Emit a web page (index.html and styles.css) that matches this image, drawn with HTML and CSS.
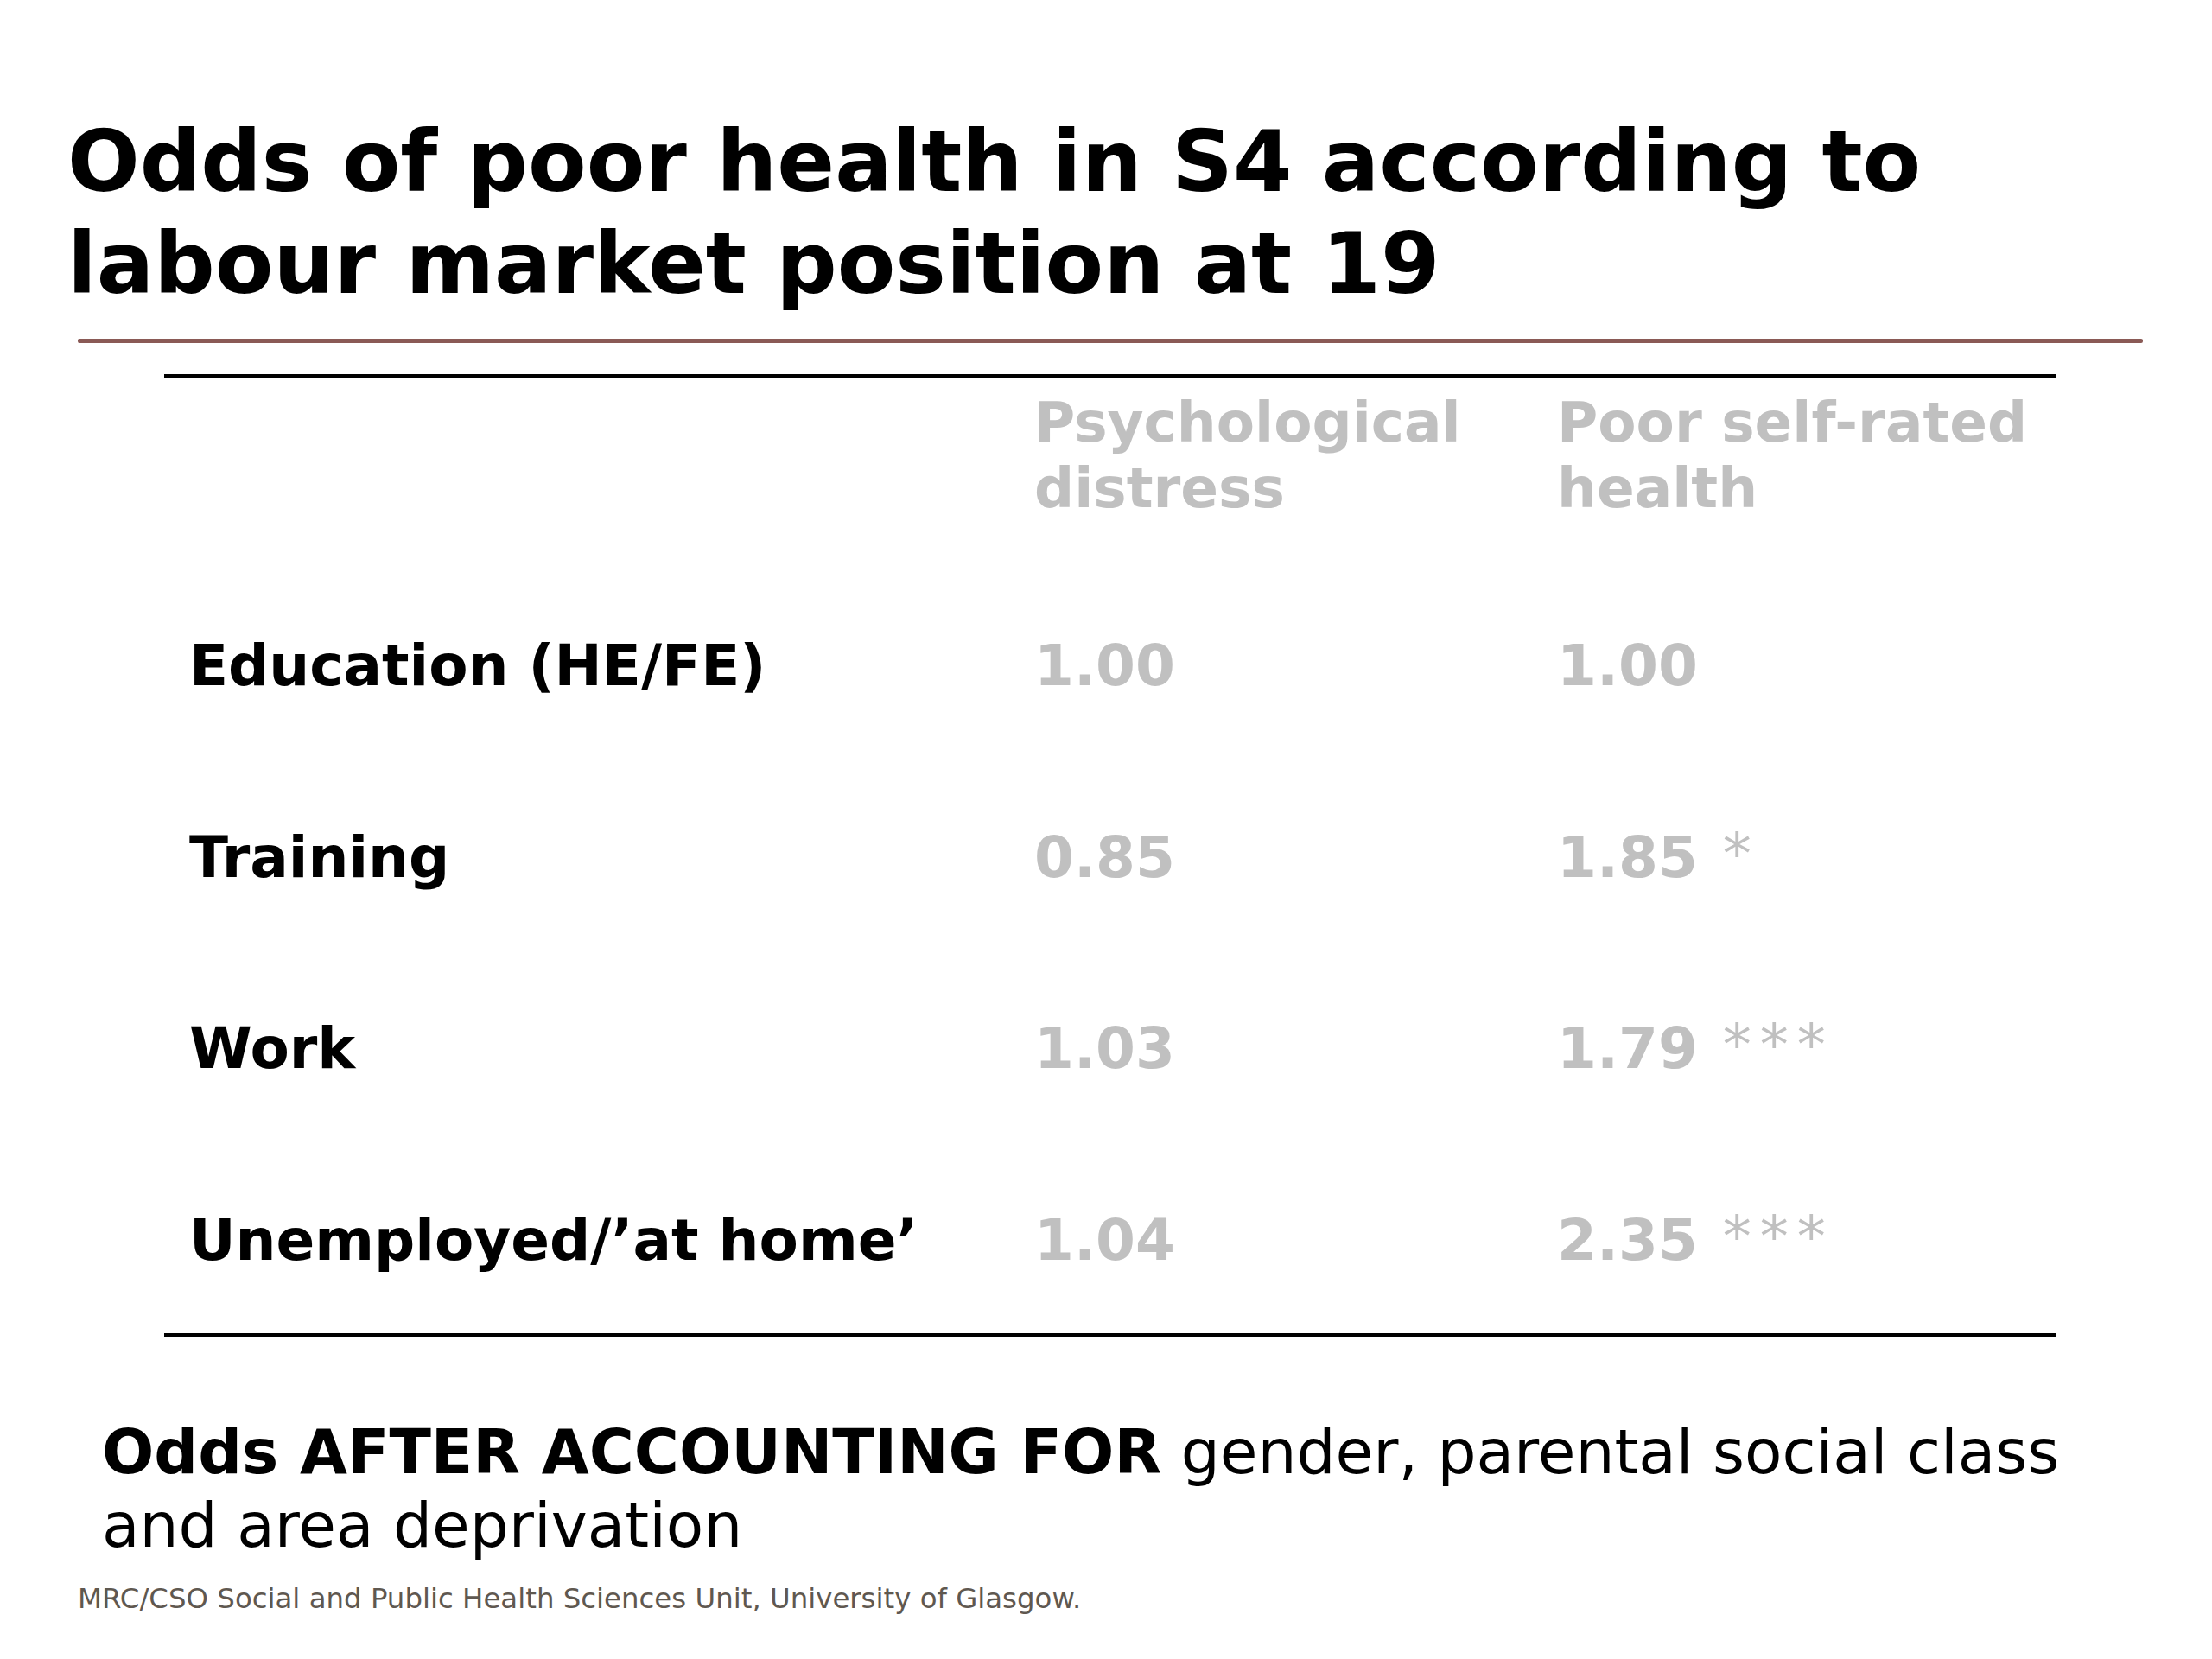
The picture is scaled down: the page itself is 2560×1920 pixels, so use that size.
FILE: index.html
```html
<!DOCTYPE html>
<html lang="en">
<head>
<meta charset="utf-8">
<title>Odds of poor health in S4</title>
<link rel="stylesheet" href="styles.css">
</head>
<body>
<main class="slide">
  <h1 class="title">Odds of poor health in S4 according to<br>labour market position at 19</h1>
  <div class="title-rule"></div>
  <section class="table">
    <div class="head">
      <div class="cell label"></div>
      <div class="cell hcell">Psychological<br>distress</div>
      <div class="cell hcell">Poor self-rated<br>health</div>
    </div>
    <div class="rows">
      <div class="cell label">Education (HE/FE)</div>
      <div class="cell val">1.00</div>
      <div class="cell val">1.00</div>

      <div class="cell label">Training</div>
      <div class="cell val">0.85</div>
      <div class="cell val">1.85 <span class="star">*</span></div>

      <div class="cell label">Work</div>
      <div class="cell val">1.03</div>
      <div class="cell val">1.79 <span class="star">***</span></div>

      <div class="cell label">Unemployed/’at home’</div>
      <div class="cell val">1.04</div>
      <div class="cell val">2.35 <span class="star">***</span></div>
    </div>
  </section>
  <p class="note"><strong>Odds AFTER ACCOUNTING FOR</strong> gender, parental social class<br>and area deprivation</p>
  <p class="footer">MRC/CSO Social and Public Health Sciences Unit, University of Glasgow.</p>
</main>
</body>
</html>
```
FILE: styles.css
```css
html, body {
  margin: 0;
  padding: 0;
  background: #ffffff;
}

.slide {
  width: 2560px;
  height: 1920px;
  box-sizing: border-box;
  padding-top: 128px;
  font-family: "DejaVu Sans", Verdana, sans-serif;
  color: #000000;
}

.title {
  margin: 0 0 0 78px;
  font-size: 98.5px;
  line-height: 118px;
  font-weight: bold;
}

.title-rule {
  margin: 28px 0 0 90px;
  width: 2390px;
  height: 5px;
  background: #8a5a56;
  border-radius: 2px;
}

.table {
  margin: 36px 0 0 190px;
  width: 2190px;
  border-top: 4px solid #000000;
  border-bottom: 4px solid #000000;
  padding: 14px 0 69px 0;
}

.head,
.rows {
  display: grid;
  grid-template-columns: 1007px 605px 1fr;
  line-height: 76px;
  font-weight: bold;
}

.head {
  font-size: 64.5px;
}

.rows {
  font-size: 66px;
  margin-top: 130px;
  row-gap: 145.5px;
}

.label {
  padding-left: 29px;
  color: #000000;
}

.hcell,
.val {
  color: #c0c0c0;
}

.star {
  font-weight: normal;
  letter-spacing: 10px;
  margin-left: 6px;
  position: relative;
  top: -4px;
}

.note {
  margin: 91px 0 0 118px;
  font-size: 71px;
  line-height: 85px;
  font-weight: normal;
}

.note strong {
  font-weight: bold;
}

.footer {
  margin: 24px 0 0 90px;
  font-size: 32.4px;
  line-height: 36px;
  color: #5f5850;
}
```
